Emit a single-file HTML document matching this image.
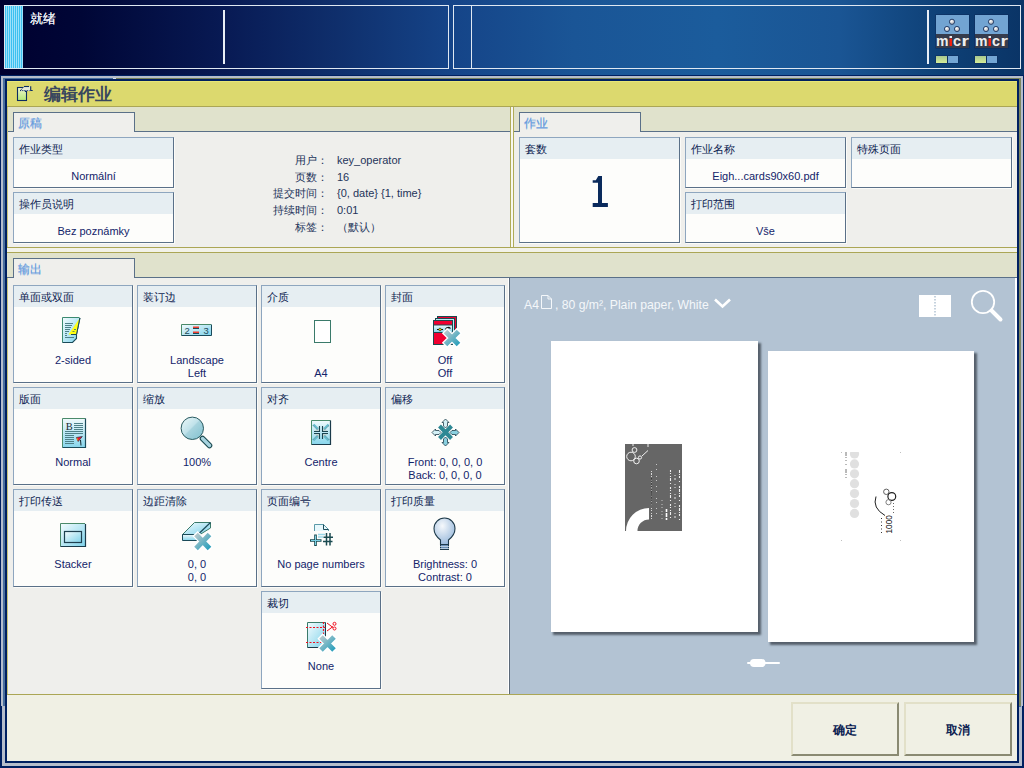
<!DOCTYPE html>
<html><head><meta charset="utf-8">
<style>
*{margin:0;padding:0;box-sizing:border-box}
html,body{width:1024px;height:768px;overflow:hidden}
body{position:relative;font-family:"Liberation Sans",sans-serif;background:linear-gradient(90deg,#000030 0%,#000636 8%,#081a54 22%,#0f2f6c 33%,#154488 44%,#1a5596 56%,#1b5c9c 70%,#1a5594 82%,#0e4076 92%,#0a3466 100%)}
.a{position:absolute}
.pan{position:absolute;border:1px solid #dfe8f2}
.card{position:absolute;width:120px;height:98px;box-shadow:1px 1px 0 #fbfbf8;border:1px solid;border-color:#8ea6bf #5a7088 #5a7088 #8ea6bf;background:#fdfdfb}
.h{height:21px;background:#e6eef2;font-size:11px;color:#0c1c50;padding:5px 0 0 5px;line-height:12px;white-space:nowrap}
.v{position:absolute;left:0;width:100%;text-align:center;font-size:11px;color:#13246a;line-height:13px;white-space:nowrap}
.sc{position:absolute;width:161px;height:51px;box-shadow:1px 1px 0 #fbfbf8;border:1px solid;border-color:#8ea6bf #5a7088 #5a7088 #8ea6bf;background:#fdfdfb}
.tab{position:absolute;width:122px;height:20px;border:1px solid #5a7088;border-bottom:none;background:#efefec;color:#6a9ede;font-size:12px;text-shadow:0 0.5px 0 rgba(106,158,222,0.7);padding:4px 0 0 4px;line-height:13px}
.info{position:absolute;font-size:11px;color:#24345a;line-height:16.7px;white-space:nowrap}
.btn{position:absolute;width:108px;height:54px;border:2px solid;border-color:#e2e0c8 #8a8a72 #8a8a72 #e2e0c8;background:#f0f0e4;font-size:12px;font-weight:bold;color:#0a2050;text-align:center;line-height:52px}
</style></head><body>

<!-- top status panels -->
<div class="pan" style="left:4px;top:5px;width:445px;height:64px"></div>
<div class="a" style="left:5px;top:6px;width:18px;height:62px;background:repeating-linear-gradient(90deg,#3cc0f0 0px,#3cc0f0 1px,#9ee0fa 1px,#9ee0fa 2px)"></div>
<div class="a" style="left:30px;top:9px;font-size:13px;color:#eef2f8;line-height:20px;text-shadow:0 0 0.4px #eef2f8">就绪</div>
<div class="a" style="left:223px;top:10px;width:2px;height:54px;background:#e8eef6"></div>
<div class="pan" style="left:453px;top:5px;width:568px;height:64px"></div>
<div class="a" style="left:471px;top:5px;width:1px;height:64px;background:#dfe8f2"></div>
<div class="a" style="left:927px;top:10px;width:2px;height:54px;background:#e8eef6"></div>

<!-- frame -->
<div class="a" style="left:0;top:75px;width:1024px;height:693px;background:#002060"></div>
<div class="a" style="left:1px;top:76px;width:1022px;height:690px;background:#b5bdcb"></div>
<div class="a" style="left:3px;top:78px;width:1018px;height:685px;background:#4a709e"></div>
<div class="a" style="left:5px;top:79px;width:1014px;height:684px;background:#002060"></div>
<div class="a" style="left:116px;top:78px;width:905px;height:1px;background:#78825a"></div>
<div class="a" style="left:113px;top:78px;width:3px;height:1px;background:#d8e0e8"></div>
<div class="a" style="left:1019px;top:78px;width:2px;height:628px;background:#7c8660"></div>
<div class="a" style="left:0;top:706px;width:2px;height:62px;background:#002060"></div>
<div class="a" style="left:2px;top:706px;width:3px;height:57px;background:#b5bdcb"></div>
<div class="a" style="left:1019px;top:707px;width:3px;height:56px;background:#b5bdcb"></div>
<div class="a" style="left:1022px;top:706px;width:2px;height:62px;background:#002060"></div>

<!-- content bg -->
<div class="a" style="left:7px;top:81px;width:1010px;height:680px;background:#efefec"></div>
<div class="a" style="left:7px;top:81px;width:1010px;height:25px;background:#dcd96e"></div>
<div class="a" style="left:7px;top:81px;width:1010px;height:1px;background:#e8e676"></div>
<div class="a" style="left:7px;top:106px;width:1010px;height:1px;background:#aba655"></div>
<div class="a" style="left:44px;top:85px;font-size:17px;font-weight:bold;color:#39475e;line-height:20px">编辑作业</div>
<div class="a" style="left:7px;top:107px;width:1010px;height:24px;background:#e0e2cc"></div>
<div class="a" style="left:7px;top:131px;width:503px;height:1px;background:#5a7088"></div>
<div class="a" style="left:514px;top:131px;width:503px;height:1px;background:#5a7088"></div>
<div class="a" style="left:510px;top:107px;width:1px;height:140px;background:#b0ac58"></div>
<div class="a" style="left:511px;top:107px;width:2px;height:140px;background:#f8f8f0"></div>
<div class="a" style="left:513px;top:107px;width:1px;height:140px;background:#b0ac58"></div>
<div class="a" style="left:7px;top:107px;width:1px;height:587px;background:#c8c47a"></div>
<div class="tab" style="left:13px;top:112px">原稿</div>
<div class="tab" style="left:519px;top:112px">作业</div>
<div class="a" style="left:7px;top:247px;width:1010px;height:1px;background:#aba655"></div>
<div class="a" style="left:7px;top:248px;width:1010px;height:4px;background:#f2f2e8"></div>
<div class="a" style="left:7px;top:252px;width:1010px;height:1px;background:#aba655"></div>
<div class="a" style="left:7px;top:253px;width:1010px;height:24px;background:#e0e2cc"></div>
<div class="a" style="left:7px;top:277px;width:1010px;height:1px;background:#5a7088"></div>
<div class="tab" style="left:13px;top:258px">输出</div>
<!-- preview -->
<div class="a" style="left:508px;top:278px;width:1px;height:416px;background:#ffffff"></div>
<div class="a" style="left:509px;top:278px;width:1px;height:416px;background:#5a6878"></div>
<div class="a" style="left:510px;top:278px;width:505px;height:416px;background:#b3c3d3"></div>
<div class="a" style="left:1015px;top:278px;width:2px;height:416px;background:#ffffff"></div>
<!-- footer -->
<div class="a" style="left:7px;top:694px;width:1010px;height:1px;background:#aba655"></div>
<div class="a" style="left:7px;top:695px;width:1010px;height:66px;background:#f0f0e4"></div>
<div class="btn" style="left:791px;top:702px">确定</div>
<div class="btn" style="left:904px;top:702px">取消</div>

<!-- section 1 -->
<div class="sc" style="left:13px;top:137px"><div class="h">作业类型</div><div class="v" style="top:32px">Normální</div></div>
<div class="sc" style="left:13px;top:192px"><div class="h">操作员说明</div><div class="v" style="top:32px">Bez poznámky</div></div>
<div class="info" style="left:202px;top:152px;width:126px;text-align:right">用户：<br>页数：<br>提交时间：<br>持续时间：<br>标签：</div>
<div class="info" style="left:337px;top:152px">key_operator<br>16<br>{0, date} {1, time}<br>0:01<br>（默认）</div>

<!-- section 2 -->
<div class="sc" style="left:519px;top:137px;height:106px"><div class="h">套数</div></div>
<div class="sc" style="left:685px;top:137px"><div class="h">作业名称</div><div class="v" style="top:32px">Eigh...cards90x60.pdf</div></div>
<div class="sc" style="left:851px;top:137px"><div class="h">特殊页面</div></div>
<div class="sc" style="left:685px;top:192px"><div class="h">打印范围</div><div class="v" style="top:32px">Vše</div></div>

<!-- output cards -->
<div class="card" style="left:13px;top:285px"><div class="h">单面或双面</div><div class="v" style="top:68px">2-sided</div></div>
<div class="card" style="left:137px;top:285px"><div class="h">装订边</div><div class="v" style="top:68px">Landscape<br>Left</div></div>
<div class="card" style="left:261px;top:285px"><div class="h">介质</div><div class="v" style="top:81px">A4</div></div>
<div class="card" style="left:385px;top:285px"><div class="h">封面</div><div class="v" style="top:68px">Off<br>Off</div></div>

<div class="card" style="left:13px;top:387px"><div class="h">版面</div><div class="v" style="top:68px">Normal</div></div>
<div class="card" style="left:137px;top:387px"><div class="h">缩放</div><div class="v" style="top:68px">100%</div></div>
<div class="card" style="left:261px;top:387px"><div class="h">对齐</div><div class="v" style="top:68px">Centre</div></div>
<div class="card" style="left:385px;top:387px"><div class="h">偏移</div><div class="v" style="top:68px">Front: 0, 0, 0, 0<br>Back: 0, 0, 0, 0</div></div>

<div class="card" style="left:13px;top:489px"><div class="h">打印传送</div><div class="v" style="top:68px">Stacker</div></div>
<div class="card" style="left:137px;top:489px"><div class="h">边距清除</div><div class="v" style="top:68px">0, 0<br>0, 0</div></div>
<div class="card" style="left:261px;top:489px"><div class="h">页面编号</div><div class="v" style="top:68px">No page numbers</div></div>
<div class="card" style="left:385px;top:489px"><div class="h">打印质量</div><div class="v" style="top:68px">Brightness: 0<br>Contrast: 0</div></div>

<div class="card" style="left:261px;top:591px"><div class="h">裁切</div><div class="v" style="top:68px">None</div></div>

<!-- preview content -->
<div class="a" style="left:524px;top:297px;font-size:12.2px;color:#f4f7fa;line-height:16px;white-space:nowrap">A4<span style="display:inline-block;width:16px"></span>, 80 g/m², Plain paper, White</div>
<div class="a" style="left:551px;top:341px;width:207px;height:291px;background:#fff;box-shadow:2px 2px 2px 0.5px #56606c"></div>
<div class="a" style="left:768px;top:351px;width:206px;height:291px;background:#fff;box-shadow:2px 2px 2px 0.5px #56606c"></div>

<!-- ICONS -->
<svg class="a" style="left:0;top:0" width="1024" height="768" viewBox="0 0 1024 768">
<defs>
<linearGradient id="gc" x1="0" y1="0" x2="1" y2="1"><stop offset="0" stop-color="#f4fcfe"/><stop offset="1" stop-color="#7ed2ea"/></linearGradient>
<linearGradient id="gcv" x1="0" y1="0" x2="0" y2="1"><stop offset="0" stop-color="#f0fafc"/><stop offset="1" stop-color="#88d6ec"/></linearGradient>
<linearGradient id="gx" x1="0" y1="0" x2="1" y2="1"><stop offset="0" stop-color="#b4c8cc"/><stop offset="1" stop-color="#2aa0bc"/></linearGradient>
<linearGradient id="gm" x1="0.1" y1="0.1" x2="0.9" y2="0.9"><stop offset="0" stop-color="#e4f4f6"/><stop offset="0.45" stop-color="#c0e2ea"/><stop offset="0.5" stop-color="#a8d4de"/><stop offset="1" stop-color="#88c4d2"/></linearGradient>
<radialGradient id="gb" cx="0.4" cy="0.3" r="0.8"><stop offset="0" stop-color="#f6f9fc"/><stop offset="1" stop-color="#8eb2d8"/></radialGradient>
<linearGradient id="gmi" x1="0" y1="0" x2="0" y2="1"><stop offset="0" stop-color="#ffffff"/><stop offset="1" stop-color="#9aa0a8"/></linearGradient>
</defs>

<!-- 2-sided -->
<g>
<path d="M62.5 317.5 H79.5 L76.5 334.5 V338.5 L72.5 342.5 H62.5 Z" fill="url(#gc)"/>
<path d="M62.5 342.5 V317.5 H79.5" fill="none" stroke="#3c8a70" stroke-width="1"/>
<path d="M80 318 L76.5 334.5 V338.5 L72.5 342.5 H62.5" fill="none" stroke="#1a4a58" stroke-width="1.1"/>
<g stroke="#4e8088" stroke-width="1">
<path d="M65 323.5H73M65 325.5H72M65 327.5H71M65 329.5H70M65 331.5H69M65 333.5H67M65 335.5H67M65 337.5H74"/>
</g>
<path d="M79.8 318 L68.5 334.5 H76.5 Z" fill="#ffff14"/>
<path d="M79.8 318 L76.5 334.5 H71" fill="none" stroke="#1a4a58" stroke-width="1"/>
<path d="M74 329.5h2M72.5 331.5h2" stroke="#3a6a70" stroke-width="0.8"/>
</g>

<!-- landscape left -->
<g>
<rect x="181.5" y="324.5" width="30" height="11" fill="url(#gc)"/>
<path d="M181.5 335.5 V324.5 H211" fill="none" stroke="#4a8a6a"/>
<path d="M211.5 324.5 V335.5 H181.5" fill="none" stroke="#1a4a5a"/>
<text x="184.5" y="334" font-family="Liberation Sans" font-size="9.5" fill="#1e4a58">2</text>
<text x="203.5" y="334" font-family="Liberation Sans" font-size="9.5" fill="#1e4a58">3</text>
<rect x="193" y="326.5" width="6" height="2" fill="#f04030"/>
<rect x="193" y="331.5" width="6" height="2" fill="#f04030"/>
<path d="M193 328.5H199M193 333.5H199" stroke="#1a4a5a" stroke-width="1"/>
</g>

<!-- A4 -->
<rect x="314.5" y="320.5" width="16" height="22" fill="#fff" stroke="#3a7a6a"/>

<!-- cover -->
<g stroke="#1a4a50" stroke-width="1">
<rect x="437.5" y="316.5" width="19" height="23" fill="#f00030"/>
<rect x="435.5" y="318.5" width="19" height="23" fill="#b8e8f4"/>
<rect x="433.5" y="320.5" width="19" height="24" fill="#f00030"/>
<rect x="434" y="325" width="18" height="7" fill="url(#gcv)" stroke="none"/>
<path d="M433.5 325H452.5M433.5 332.5H452.5"/>
</g>
<path d="M437 329.5H443M441 329.5h0" stroke="#101010" stroke-width="1"/>
<circle cx="440" cy="329.5" r="1.3" fill="#f0e000" stroke="#101010" stroke-width="0.6"/>
<path d="M445.5 330 Q446 327.5 449 327.5 L450.5 328.5" fill="none" stroke="#101010" stroke-width="1.3"/>
<g stroke-linecap="butt">
<path d="M444.5 330.5 L459.5 345.5 M459.5 330.5 L444.5 345.5" stroke="#ffffff" stroke-width="7.5"/>
<path d="M445.5 331.5 L458.5 344.5 M458.5 331.5 L445.5 344.5" stroke="url(#gx)" stroke-width="5"/>
</g>

<!-- layout Normal -->
<g>
<rect x="62.5" y="418.5" width="23" height="29" fill="url(#gcv)"/>
<path d="M62.5 447.5 V418.5 H85.5" fill="none" stroke="#4a8a6a"/>
<path d="M85.5 418.5 V447.5 H62.5" fill="none" stroke="#1a4a5a" stroke-width="1.2"/>
<text x="65.8" y="429.5" font-family="Liberation Serif" font-size="10" fill="#1a2a30" textLength="7" lengthAdjust="spacingAndGlyphs">B</text>
<g stroke="#4e8088" stroke-width="1">
<path d="M74 423.5H83M74 425.5H83M74 427.5H83M74 429.5H83M65 431.5H83M65 433.5H83M65 435.5H74M65 437.5H74M65 439.5H74M65 441.5H74M65 443.5H74"/>
</g>
<path d="M76.5 437.5 L82.3 436.5 L78.2 441.5 Z" fill="#f01038" stroke="#203040" stroke-width="0.7"/>
<path d="M77 438 L78 440.5" stroke="#f08010" stroke-width="1.1"/>
<path d="M80.5 440 L81 445.5" stroke="#1a2a30" stroke-width="1"/>
</g>

<!-- zoom magnifier -->
<g>
<path d="M202.5 438.5 L209.5 445.5" stroke="#1a4a50" stroke-width="5.6" stroke-linecap="round"/>
<path d="M202.5 438.5 L209.5 445.5" stroke="#a8d4e0" stroke-width="3.4" stroke-linecap="round"/>
<circle cx="192.3" cy="428.3" r="11.2" fill="url(#gm)" stroke="#2a5a60" stroke-width="1"/>
</g>

<!-- align centre -->
<g>
<rect x="311.5" y="420.5" width="19" height="24" fill="url(#gcv)"/>
<path d="M311.5 444.5 V420.5 H330.5" fill="none" stroke="#4a8a6a"/>
<path d="M330.5 420.5 V444.5 H311.5" fill="none" stroke="#1a3a4a" stroke-width="1.2"/>
<g fill="#c4d6d4">
<path d="M319.5 426 V431.5 H314 Z M322.5 426 V431.5 H328 Z M319.5 439 V433.5 H314 Z M322.5 439 V433.5 H328 Z"/>
</g>
<g fill="none" stroke="#1a4450" stroke-width="1.1">
<path d="M319.5 426 V431.5 H314 M322.5 426 V431.5 H328 M319.5 439 V433.5 H314 M322.5 439 V433.5 H328"/>
</g>
<g stroke="#68bccc" stroke-width="2.2">
<path d="M313.5 424.5 L318 429 M328.5 424.5 L324 429 M313.5 440.5 L318 436 M328.5 440.5 L324 436"/>
</g>
<g stroke="#1a4450" stroke-width="0.7" stroke-dasharray="0.8 0.8">
<path d="M313 425.5 L317 429.5 M329 425.5 L325 429.5 M313 439.5 L317 435.5 M329 439.5 L325 435.5"/>
</g>
</g>

<!-- offset -->
<g>
<path d="M439.5 426 L451.5 438.5 M451.5 426 L439.5 438.5" stroke="#ffffff" stroke-width="6"/>
<path d="M439.5 426 L451.5 438.5 M451.5 426 L439.5 438.5" stroke="#2e8894" stroke-width="4"/>
<g fill="#d4f0f6" stroke="#1e3e4a" stroke-width="0.8">
<path d="M445.5 419 L449 422.5 H447.5 V426 L445.5 428 L443.5 426 V422.5 H442 Z"/>
<path d="M445.5 446 L449 442.5 H447.5 V439 L445.5 437 L443.5 439 V442.5 H442 Z" fill="#8ad0e0"/>
<path d="M432 432.5 L435.5 429 V430.5 H439 L441 432.5 L439 434.5 H435.5 V436 Z"/>
<path d="M459 432.5 L455.5 429 V430.5 H452 L450 432.5 L452 434.5 H455.5 V436 Z" fill="#8ad0e0"/>
</g>
</g>

<!-- stacker -->
<g>
<rect x="60.5" y="523.5" width="25" height="23" fill="url(#gc)"/>
<path d="M60.5 546.5 V523.5 H85" fill="none" stroke="#4a8a6a"/>
<path d="M85.5 524 V546.5 H60.5" fill="none" stroke="#1a3a4a" stroke-width="1.2"/>
<rect x="64.5" y="531.5" width="17" height="11" fill="url(#gc)" stroke="#1e4050" stroke-width="1.2"/>
</g>

<!-- margin erase -->
<g>
<path d="M182.5 534.5 L194.5 522.5 H210.5 V528 L200 534.5 H182.5 Z" fill="url(#gc)" stroke="#3a7a6a" stroke-width="1"/>
<path d="M182.5 534.5 V540.5 H197 V534.5 Z" fill="url(#gcv)" stroke="#1a4a58" stroke-width="1"/>
<path d="M210.5 522.5 L199 533.5" stroke="#1a4a58" stroke-width="1.2"/>
<g>
<path d="M195 533.5 L210.5 549.5 M210.5 533.5 L195 549.5" stroke="#ffffff" stroke-width="7.5"/>
<path d="M196 534.5 L209.5 548.5 M209.5 534.5 L196 548.5" stroke="url(#gx)" stroke-width="5"/>
</g>
</g>

<!-- page numbers -->
<g>
<path d="M314.5 531 V524.5 H323.5 L328.5 529.5 V531" fill="#e8f8fc" stroke="#5a9aa8" stroke-width="1"/>
<path d="M323.5 524.5 V529.5 H328.5" fill="none" stroke="#1a4a58" stroke-width="1"/>
<path d="M318 534.5H325M318 537H323" stroke="#9ad8e8" stroke-width="1.5"/>
<path d="M315.5 534.5 V546 M310 540.5 H321.5" stroke="#1a4a50" stroke-width="2.6"/>
<path d="M315.5 535.5 V545 M311 540.5 H320.5" stroke="#7ad0e4" stroke-width="1"/>
<g stroke="#1a4a50" stroke-width="1.5">
<path d="M326.5 533 V545.5 M330 533 V545.5 M323.5 537.2 H333 M323 541.5 H332.5"/>
</g>
</g>

<!-- bulb -->
<g>
<path d="M440.5 544.5 V540 Q434 535 434 528.5 A10.5 10.5 0 0 1 455 528.5 Q455 535 448.5 540 V544.5 Z" fill="url(#gb)" stroke="#1e3a4a" stroke-width="1.1"/>
<rect x="440.5" y="544.5" width="8" height="5" fill="#6a90b8" stroke="#1e3a4a" stroke-width="1"/>
<path d="M440 546.5H449M440 548.5H449" stroke="#d8e8f0" stroke-width="0.7"/>
</g>

<!-- crop -->
<g>
<rect x="307.5" y="622.5" width="18" height="25" fill="url(#gc)"/>
<path d="M307.5 647.5 V622.5 H325.5" fill="none" stroke="#3a7a6a" stroke-width="1"/>
<path d="M325.5 622.5 V647.5 H307.5" fill="none" stroke="#1a3a4a" stroke-width="1"/>
<path d="M306 627.5 H326 M306 642.5 H326 M323.5 622 V634" stroke="#f01020" stroke-width="1.2" stroke-dasharray="2 1.5"/>
<path d="M327 623 L333 627.5 M327 631 L333 626.5" stroke="#f01020" stroke-width="1"/>
<circle cx="334.5" cy="623.8" r="1.5" fill="none" stroke="#f01020" stroke-width="1"/>
<circle cx="334.5" cy="628.5" r="1.5" fill="none" stroke="#f01020" stroke-width="1"/>
<path d="M320 636 L335 651 M335 636 L320 651" stroke="#ffffff" stroke-width="7.5"/>
<path d="M321 637 L334 650 M334 637 L321 650" stroke="url(#gx)" stroke-width="5"/>
</g>

</svg>
<!-- /ICONS -->
<!-- TOP -->
<svg class="a" style="left:0;top:0" width="1024" height="768" viewBox="0 0 1024 768">
<defs>
<radialGradient id="gd" cx="0.4" cy="0.35" r="0.7"><stop offset="0" stop-color="#ffffff"/><stop offset="1" stop-color="#a0a4ac"/></radialGradient>
<linearGradient id="gg" x1="0" y1="0" x2="0" y2="1"><stop offset="0" stop-color="#a8c890"/><stop offset="1" stop-color="#d4ec98"/></linearGradient>
<linearGradient id="gt" x1="0" y1="0" x2="0" y2="1"><stop offset="0" stop-color="#ffffff"/><stop offset="1" stop-color="#c0c4c8"/></linearGradient>
</defs>
<g id="micr1">
<rect x="935.5" y="14.5" width="34" height="34" fill="#0c2a5a"/>
<rect x="936" y="15" width="33" height="19" fill="#72a4d2"/>
<rect x="936" y="34" width="33" height="14" fill="#363c4c"/>
<circle cx="952" cy="21.8" r="2.6" fill="url(#gd)" stroke="#1a3462" stroke-width="0.9"/>
<circle cx="947" cy="29" r="2.6" fill="url(#gd)" stroke="#1a3462" stroke-width="0.9"/>
<circle cx="957" cy="29" r="2.6" fill="url(#gd)" stroke="#1a3462" stroke-width="0.9"/>
<text x="936" y="46" font-family="Liberation Sans" font-weight="bold" font-size="14.5" fill="#eeeeee" textLength="12.5" lengthAdjust="spacingAndGlyphs">m</text>
<text x="953" y="46" font-family="Liberation Sans" font-weight="bold" font-size="14.5" fill="#eeeeee" textLength="8" lengthAdjust="spacingAndGlyphs">c</text>
<text x="961.5" y="46" font-family="Liberation Sans" font-weight="bold" font-size="14.5" fill="#eeeeee" textLength="7.5" lengthAdjust="spacingAndGlyphs">r</text>
<rect x="949.5" y="38.5" width="2.5" height="7.5" fill="#f02010"/>
<rect x="949.5" y="36" width="2.5" height="2" fill="#e8eef4"/>
<rect x="935.5" y="55.5" width="12" height="8" fill="#0c2a5a"/>
<rect x="936" y="56" width="11" height="7" fill="url(#gg)"/>
<rect x="947.5" y="55.5" width="11" height="8" fill="#0c2a5a"/>
<rect x="948" y="56" width="10" height="7" fill="#74a6d4"/>
</g>
<use href="#micr1" x="39" y="0"/>

<!-- preview toolbar -->
<path d="M541.5 295.5 H548 L551.5 299 V308.5 H541.5 Z M548 295.5 V299 H551.5" fill="none" stroke="#f4f7fa" stroke-width="1"/>
<path d="M715 299.5 L722.5 306.5 L730 299.5" fill="none" stroke="#ffffff" stroke-width="2.6"/>
<rect x="919" y="295" width="32" height="22" fill="#ffffff"/>
<path d="M935 296 V317" stroke="#b3c3d3" stroke-width="1.5" stroke-dasharray="1.5 1.5"/>
<circle cx="983" cy="302" r="11.2" fill="none" stroke="#ffffff" stroke-width="1.8"/>
<path d="M991.5 310.5 L1000.5 319.5" stroke="#ffffff" stroke-width="4" stroke-linecap="round"/>
<path d="M748 663 H779" stroke="#ffffff" stroke-width="2" stroke-linecap="round"/>
<rect x="750" y="659" width="15.5" height="8" rx="4" fill="#ffffff"/>

<!-- page 1 card -->
<rect x="625" y="444" width="57" height="87" fill="#666666"/>
<path d="M626 531 A23 23 0 0 1 649 508 V519.5 A11.5 11.5 0 0 0 637.5 531 Z" fill="#ffffff"/>
<g fill="none" stroke="#ffffff" stroke-width="0.9">
<circle cx="631" cy="456.5" r="4.3"/>
<circle cx="634.5" cy="450" r="2.4"/>
<circle cx="636.5" cy="461" r="2.8"/>
<circle cx="640" cy="457.5" r="1.6"/>
<path d="M642 456 L648 450.5"/>
<path d="M633 444 V446 M648 444 V447"/>
</g>
<g stroke="#ffffff" fill="none">
<path d="M651.5 471 V520" stroke-width="1" stroke-dasharray="1 1 2 1 1 3 1 1 1 2" opacity="0.75"/>
<path d="M656.5 464 V520" stroke-width="0.8" stroke-dasharray="1 4 1 6 1 3 1 5" opacity="0.8"/>
<path d="M662 500 V520" stroke-width="0.8" stroke-dasharray="1 3 1 2" opacity="0.8"/>
<path d="M666.5 509 V520" stroke-width="1.6" stroke-dasharray="3 1 4 1"/>
<path d="M670.5 470 V520" stroke-width="1.1" stroke-dasharray="2 1 1 2 1 1 3 2 1 3" opacity="0.9"/>
<path d="M675 475 V520" stroke-width="1" stroke-dasharray="1 2 2 4 1 2 1 6" opacity="0.85"/>
<path d="M679.5 470 V520" stroke-width="1.1" stroke-dasharray="3 1 1 1 2 3 1 4 2 1" opacity="0.9"/>
</g>
<path d="M651.5 478 V505" stroke="#303030" stroke-width="0.8" stroke-dasharray="1 0.6"/>

<!-- page 2 card -->
<clipPath id="cp2"><rect x="840" y="452" width="62" height="90"/></clipPath>
<g fill="#e0e0e0" clip-path="url(#cp2)">
<circle cx="854.5" cy="454" r="4.6"/><circle cx="854.5" cy="463.9" r="4.6"/><circle cx="854.5" cy="473.8" r="4.6"/><circle cx="854.5" cy="483.7" r="4.6"/><circle cx="854.5" cy="493.6" r="4.6"/><circle cx="854.5" cy="503.5" r="4.6"/><circle cx="854.5" cy="513.4" r="4.6"/>
</g>
<path d="M846 452 V481" stroke="#505050" stroke-width="0.8" stroke-dasharray="4 1 1 2 1 3 1 4"/>
<g fill="none" stroke="#202020" stroke-width="1">
<circle cx="886.3" cy="491.8" r="2.7" stroke="#606060"/>
<circle cx="891.8" cy="496.5" r="3.9" stroke-width="1.2"/>
<circle cx="888.5" cy="502.2" r="2.6" stroke="#808080"/>
<path d="M876 496.5 Q872 508 885 515.5"/>
</g>
<text x="0" y="0" transform="translate(892,533.5) rotate(-90)" font-family="Liberation Sans" font-size="8.3" fill="#101010">1000</text>
<path d="M881.5 518 V534" stroke="#202020" stroke-width="0.9" stroke-dasharray="1 2.5"/>
<path d="M893.5 503 V515" stroke="#404040" stroke-width="0.8" stroke-dasharray="1 2"/>
<g fill="#c0c0c0"><rect x="841" y="452" width="1" height="1"/><rect x="900" y="452" width="1" height="1"/><rect x="841" y="540" width="1" height="1"/><rect x="900" y="540" width="1" height="1"/></g>
</svg>
<!-- /TOP -->
<!-- MISC -->
<svg class="a" style="left:0;top:0" width="1024" height="768" viewBox="0 0 1024 768">
<defs>
<linearGradient id="gti" x1="0" y1="0" x2="0" y2="1"><stop offset="0" stop-color="#f2f4d0"/><stop offset="1" stop-color="#b4e874"/></linearGradient>
</defs>
<!-- title icon -->
<rect x="17.5" y="87.5" width="9" height="13" fill="url(#gti)" stroke="#0c2c62" stroke-width="1.1"/>
<path d="M20 91 L24 86.5 H30.5 V90.5 H32.5 V91 Z" fill="#e4ead8"/>
<path d="M24 86.5 H29" stroke="#0c2c62" stroke-width="1.1"/>
<path d="M30.7 86.3 V90.5 H32.7" fill="none" stroke="#0c2c62" stroke-width="1.1"/>
<path d="M20 90.8 L24 87" stroke="#0c2c62" stroke-width="1" stroke-dasharray="1 0.8"/>
<path d="M20 90.6 H29.5" stroke="#0c2c62" stroke-width="1" stroke-dasharray="1.2 1"/>
<path d="M24.7 91 L26.3 92" stroke="#0c2c62" stroke-width="1"/>
<!-- big 1 -->
<path d="M592.7 180.3 H595.8 L598.3 176 H602 V203 H607.9 V207 H592.7 V203 H598 V182.8 H592.7 Z" fill="#0a2a5c"/>
</svg>
<!-- /MISC -->
</body></html>
